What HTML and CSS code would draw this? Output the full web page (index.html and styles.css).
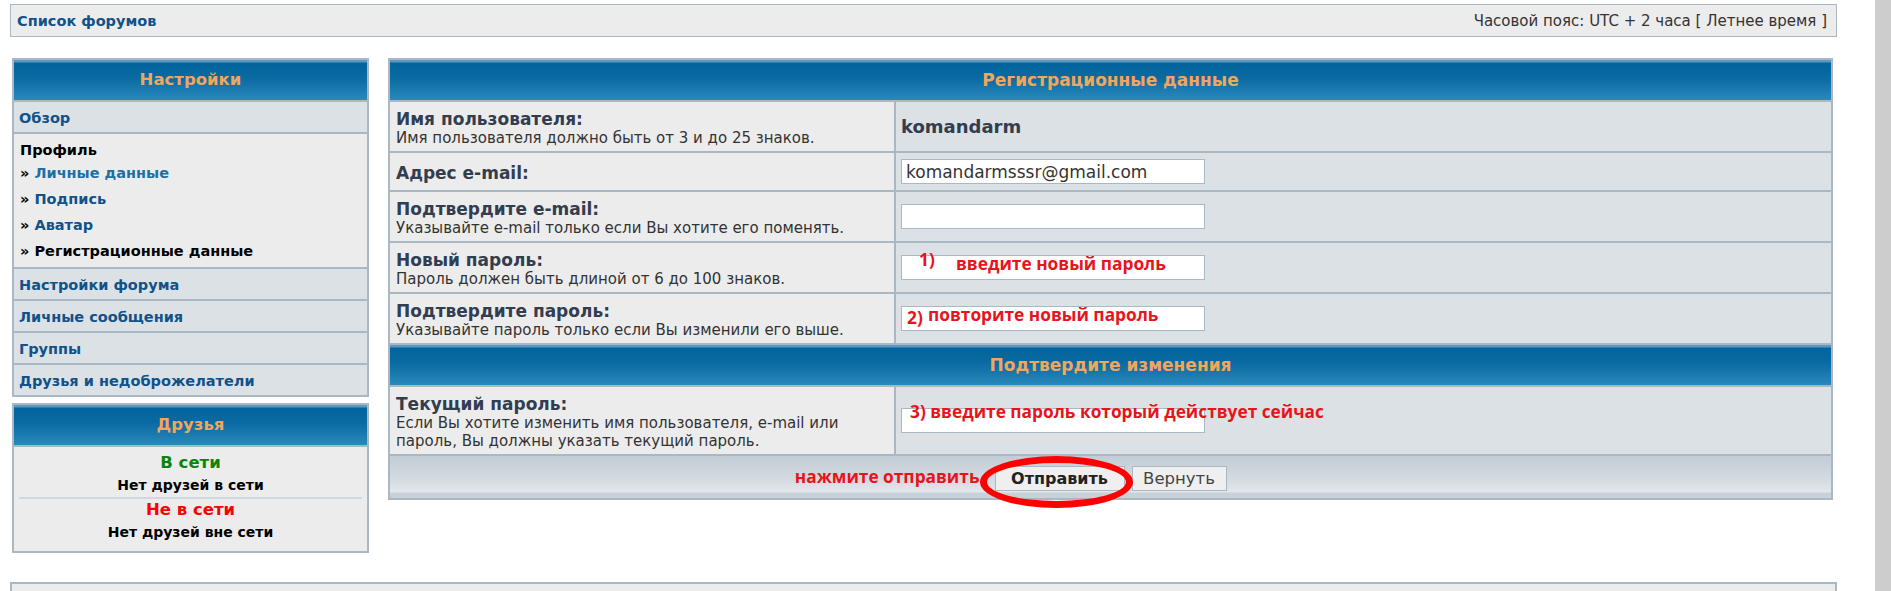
FILE: index.html
```html
<!DOCTYPE html>
<html lang="ru">
<head>
    <meta charset="UTF-8">
    <title>Регистрационные данные</title>
    <link rel="stylesheet" href="styles.css">
</head>
<body>
    <div class="page">
        <div class="navbar">
            <a class="nav-link" href="#">Список форумов</a>
            <span class="timezone">Часовой пояс: UTC + 2 часа [ Летнее время ]</span>
        </div>

        <div class="main">
            <div class="sidebar">
                <div class="panel">
                    <div class="panel-head">Настройки</div>
                    <div class="menu-row"><a href="#">Обзор</a></div>
                    <div class="menu-profile">
                        <div class="menu-title">Профиль</div>
                        <div class="menu-item">» <a class="light" href="#">Личные данные</a></div>
                        <div class="menu-item">» <a href="#">Подпись</a></div>
                        <div class="menu-item">» <a href="#">Аватар</a></div>
                        <div class="menu-item">» Регистрационные данные</div>
                    </div>
                    <div class="menu-row"><a href="#">Настройки форума</a></div>
                    <div class="menu-row"><a href="#">Личные сообщения</a></div>
                    <div class="menu-row"><a href="#">Группы</a></div>
                    <div class="menu-row"><a href="#">Друзья и недоброжелатели</a></div>
                </div>

                <div class="panel">
                    <div class="panel-head">Друзья</div>
                    <div class="friends">
                        <div class="friends-title online">В сети</div>
                        <div class="friends-text">Нет друзей в сети</div>
                        <div class="friends-sep"></div>
                        <div class="friends-title offline">Не в сети</div>
                        <div class="friends-text">Нет друзей вне сети</div>
                    </div>
                </div>
            </div>

            <div class="form-panel">
                <div class="panel-head wide">Регистрационные данные</div>

                <div class="cell label">
                    <div class="label-title">Имя пользователя:</div>
                    <div class="hint">Имя пользователя должно быть от 3 и до 25 знаков.</div>
                </div>
                <div class="cell value"><span class="username">komandarm</span></div>

                <div class="cell label">
                    <div class="label-title">Адрес e-mail:</div>
                </div>
                <div class="cell value"><input class="text-input" type="text" value="komandarmsssr@gmail.com"></div>

                <div class="cell label">
                    <div class="label-title">Подтвердите e-mail:</div>
                    <div class="hint">Указывайте e-mail только если Вы хотите его поменять.</div>
                </div>
                <div class="cell value"><input class="text-input" type="text" value=""></div>

                <div class="cell label">
                    <div class="label-title">Новый пароль:</div>
                    <div class="hint">Пароль должен быть длиной от 6 до 100 знаков.</div>
                </div>
                <div class="cell value">
                    <div class="field">
                        <input class="text-input" type="password" value="">
                        <span class="note note-1a">1)</span>
                        <span class="note note-1b">введите новый пароль</span>
                    </div>
                </div>

                <div class="cell label">
                    <div class="label-title">Подтвердите пароль:</div>
                    <div class="hint">Указывайте пароль только если Вы изменили его выше.</div>
                </div>
                <div class="cell value">
                    <div class="field">
                        <input class="text-input" type="password" value="">
                        <span class="note note-2a">2)</span>
                        <span class="note note-2b">повторите новый пароль</span>
                    </div>
                </div>

                <div class="panel-head wide">Подтвердите изменения</div>

                <div class="cell label">
                    <div class="label-title">Текущий пароль:</div>
                    <div class="hint">Если Вы хотите изменить имя пользователя, e-mail или<br>пароль, Вы должны указать текущий пароль.</div>
                </div>
                <div class="cell value">
                    <div class="field">
                        <input class="text-input" type="password" value="">
                        <span class="note note-3">3) введите пароль который действует сейчас</span>
                    </div>
                </div>

                <div class="form-foot">
                    <div class="buttons">
                        <span class="note note-submit">нажмите отправить</span>
                        <div class="submit-wrap">
                            <button class="btn btn-main" type="button">Отправить</button>
                            <span class="ring"></span>
                        </div>
                        <button class="btn btn-reset" type="button">Вернуть</button>
                    </div>
                </div>
            </div>
        </div>

        <div class="footbar"></div>
    </div>
    <div class="scroll-strip"></div>
</body>
</html>
```

FILE: styles.css
```css
html, body {
    margin: 0;
    height: 100%;
    overflow: hidden;
}

body {
    display: flex;
    background: #fff;
    font-family: "DejaVu Sans", Verdana, sans-serif;
    color: #333;
}

.page {
    flex: 1;
    padding: 4px 38px 0 10px;
}

.scroll-strip {
    width: 16px;
    flex-shrink: 0;
    background: #cdcdcd;
}

.navbar {
    height: 31px;
    border: 1px solid #a9b8c2;
    background: #ececec;
    display: flex;
    justify-content: space-between;
    align-items: center;
    padding: 0 9px 0 6px;
}

.nav-link {
    font-size: 14.5px;
    font-weight: bold;
    color: #105289;
    text-decoration: none;
}

.timezone {
    font-size: 15px;
    color: #333;
}

.main {
    display: flex;
    gap: 19px;
    margin: 21px 4px 0 2px;
    align-items: flex-start;
}

.sidebar {
    width: 357px;
    display: flex;
    flex-direction: column;
    gap: 6px;
}

.panel {
    background: #a9b8c2;
    padding: 2px;
    display: flex;
    flex-direction: column;
    gap: 2px;
}

.panel-head {
    height: 40px;
    line-height: 40px;
    text-align: center;
    font-size: 16.5px;
    font-weight: bold;
    color: #f0a65e;
    background: linear-gradient(to bottom, #5c98c0 0, #5c98c0 2px, #03639c 3px, #0a6aa2 45%, #2a89bb 100%);
}

.panel-head.wide {
    grid-column: 1 / 3;
    font-size: 17px;
}

.menu-row {
    height: 30px;
    line-height: 31px;
    padding: 0 5px;
    background: #dce1e5;
}

.menu-row a,
.menu-item a {
    font-size: 14.5px;
    font-weight: bold;
    color: #105289;
    text-decoration: none;
}

.menu-item a.light {
    color: #1f6fa3;
}

.menu-profile {
    background: #ececec;
    padding: 6px 6px 3px;
}

.menu-title {
    font-size: 14.5px;
    font-weight: bold;
    line-height: 20px;
    color: #000;
}

.menu-item {
    font-size: 14.5px;
    font-weight: bold;
    line-height: 26px;
    color: #000;
}

.friends {
    background: #ececec;
    padding: 5px 0 7px;
    text-align: center;
}

.friends-title {
    font-size: 16.5px;
    font-weight: bold;
    line-height: 22px;
}

.online {
    color: #0a840a;
}

.offline {
    color: #f00;
}

.friends-text {
    font-size: 14px;
    font-weight: bold;
    line-height: 23px;
    color: #000;
}

.friends-sep {
    height: 2px;
    margin: 0 5px;
    background: #d0d7dd;
}

.form-panel {
    flex: 1;
    display: grid;
    grid-template-columns: 504px 1fr;
    gap: 2px;
    padding: 2px;
    background: #a9b8c2;
}

.cell.label {
    background: #ececec;
    display: flex;
    flex-direction: column;
    justify-content: center;
    padding: 7px 6px 4px;
}

.cell.value {
    background: #dce1e5;
    display: flex;
    align-items: center;
    padding: 6px 5px;
}

.label-title {
    font-size: 17px;
    font-weight: bold;
    line-height: 20px;
    color: #323d4f;
}

.hint {
    font-size: 15px;
    line-height: 18px;
    color: #333;
}

.username {
    font-size: 18px;
    font-weight: bold;
    color: #323d4f;
}

.text-input {
    box-sizing: border-box;
    width: 304px;
    height: 25px;
    margin: 0;
    padding: 0 4px;
    border: 1px solid #a9b8c2;
    background: #fff;
    font-family: "DejaVu Sans", Verdana, sans-serif;
    font-size: 17px;
    color: #333;
}

.field {
    position: relative;
    width: 304px;
    height: 25px;
}

.note {
    position: absolute;
    font-family: "Open Sans", sans-serif;
    font-size: 17.3px;
    font-weight: bold;
    line-height: 19px;
    color: #e8141c;
    white-space: nowrap;
}

.note-1a { left: 18px; top: -5px; }
.note-1b { left: 55px; top: -1px; }
.note-2a { left: 6px; top: 2px; }
.note-2b { left: 27px; top: -1px; }
.note-3 { left: 9px; top: -6px; }

.form-foot {
    grid-column: 1 / 3;
    height: 42px;
    box-sizing: border-box;
    padding-top: 3px;
    display: flex;
    justify-content: center;
    align-items: center;
    background: linear-gradient(to bottom, #c3cdd6 0, #d3dae0 55%, #e2e7eb 86%, #c9d1d8 88%, #c9d1d8 100%);
}

.buttons {
    position: relative;
    display: flex;
    gap: 7px;
}

.note-submit {
    right: calc(100% + 15px);
    top: 1px;
}

.submit-wrap {
    position: relative;
}

.btn {
    box-sizing: border-box;
    height: 25px;
    margin: 0;
    padding: 0;
    border: 1px solid #a9b8c2;
    background: #efefef;
    font-family: "DejaVu Sans", Verdana, sans-serif;
    font-size: 16.5px;
    color: #444;
}

.btn-main {
    width: 130px;
    font-size: 16px;
    font-weight: bold;
    color: #222;
}

.btn-reset {
    width: 95px;
}

.ring {
    position: absolute;
    left: -15px;
    right: -8px;
    top: -10px;
    bottom: -17px;
    border: 7px solid #f00;
    border-radius: 50%;
    pointer-events: none;
}

.footbar {
    margin-top: 29px;
    height: 40px;
    border: 2px solid #a9b8c2;
    background: #ececec;
}
```
